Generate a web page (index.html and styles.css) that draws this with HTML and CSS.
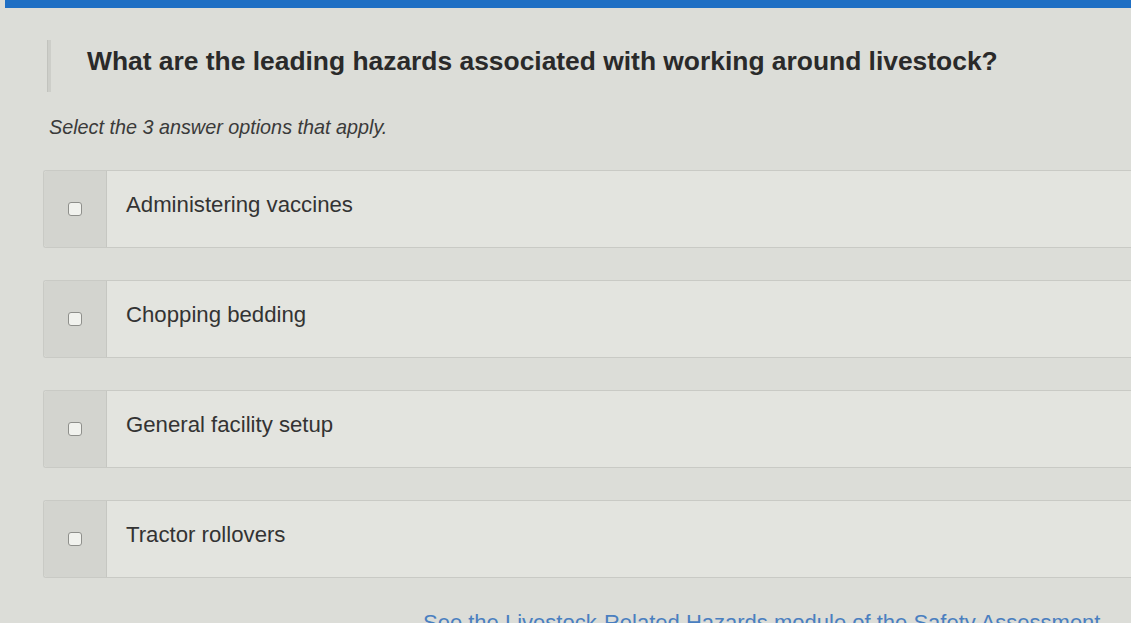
FILE: index.html
```html
<!DOCTYPE html>
<html lang="en">
<head>
<meta charset="utf-8">
<title>Question</title>
<link rel="stylesheet" href="styles.css">
</head>
<body>
  <div class="topbar"></div>
  <main class="quiz">
    <div class="question">
      <span class="marker"></span>
      <h1 class="prompt">What are the leading hazards associated with working around livestock?</h1>
    </div>
    <p class="hint">Select the 3 answer options that apply.</p>
    <ul class="options">
      <li class="option"><span class="check-cell"><span class="box"></span></span><span class="label">Administering vaccines</span></li>
      <li class="option"><span class="check-cell"><span class="box"></span></span><span class="label">Chopping bedding</span></li>
      <li class="option"><span class="check-cell"><span class="box"></span></span><span class="label">General facility setup</span></li>
      <li class="option"><span class="check-cell"><span class="box"></span></span><span class="label">Tractor rollovers</span></li>
    </ul>
    <p class="more">See the Livestock-Related Hazards module of the Safety Assessment</p>
  </main>
</body>
</html>
```
FILE: styles.css
```css
html, body {
  margin: 0;
  padding: 0;
}

body {
  width: 1131px;
  height: 623px;
  overflow: hidden;
  background: #dcddd8;
  font-family: "Liberation Sans", Arial, sans-serif;
  color: #2f2f2f;
}

.topbar {
  height: 8px;
  margin-left: 5px;
  background: #1f6fc4;
}

.quiz {
  padding: 0 0 0 43px;
}

.question {
  display: flex;
  align-items: flex-start;
  gap: 36px;
  margin-top: 32px;
  height: 52px;
}

.marker {
  width: 3px;
  height: 52px;
  background: #cdcec9;
  border-left: 1px solid #c2c3be;
  margin-left: 4px;
}

.prompt {
  margin: 5px 0 0;
  font-size: 26.4px;
  line-height: 32px;
  font-weight: 700;
  color: #2a2a2a;
}

.hint {
  margin: 23px 0 0 6px;
  font-size: 19.8px;
  line-height: 24px;
  font-style: italic;
  color: #3a3a3a;
}

.options {
  list-style: none;
  margin: 31px 0 0;
  padding: 0;
  display: flex;
  flex-direction: column;
  gap: 32px;
}

.option {
  display: flex;
  height: 76px;
  background: #e3e4df;
  border: 1px solid #c9cac5;
  border-right: none;
  border-radius: 3px 0 0 3px;
}

.check-cell {
  width: 62px;
  flex: none;
  display: flex;
  align-items: center;
  justify-content: center;
  background: #d3d4cf;
  border-right: 1px solid #c6c7c2;
  border-radius: 3px 0 0 3px;
}

.box {
  width: 12px;
  height: 12px;
  border: 1.5px solid #8e8f8b;
  border-radius: 3px;
  background: #f1f2ee;
}

.label {
  padding: 21px 0 0 19px;
  font-size: 22.2px;
  line-height: 26px;
  color: #333;
}

.more {
  margin: 32px 0 0 380px;
  font-size: 22px;
  color: #4a7fc0;
  white-space: nowrap;
}
```
